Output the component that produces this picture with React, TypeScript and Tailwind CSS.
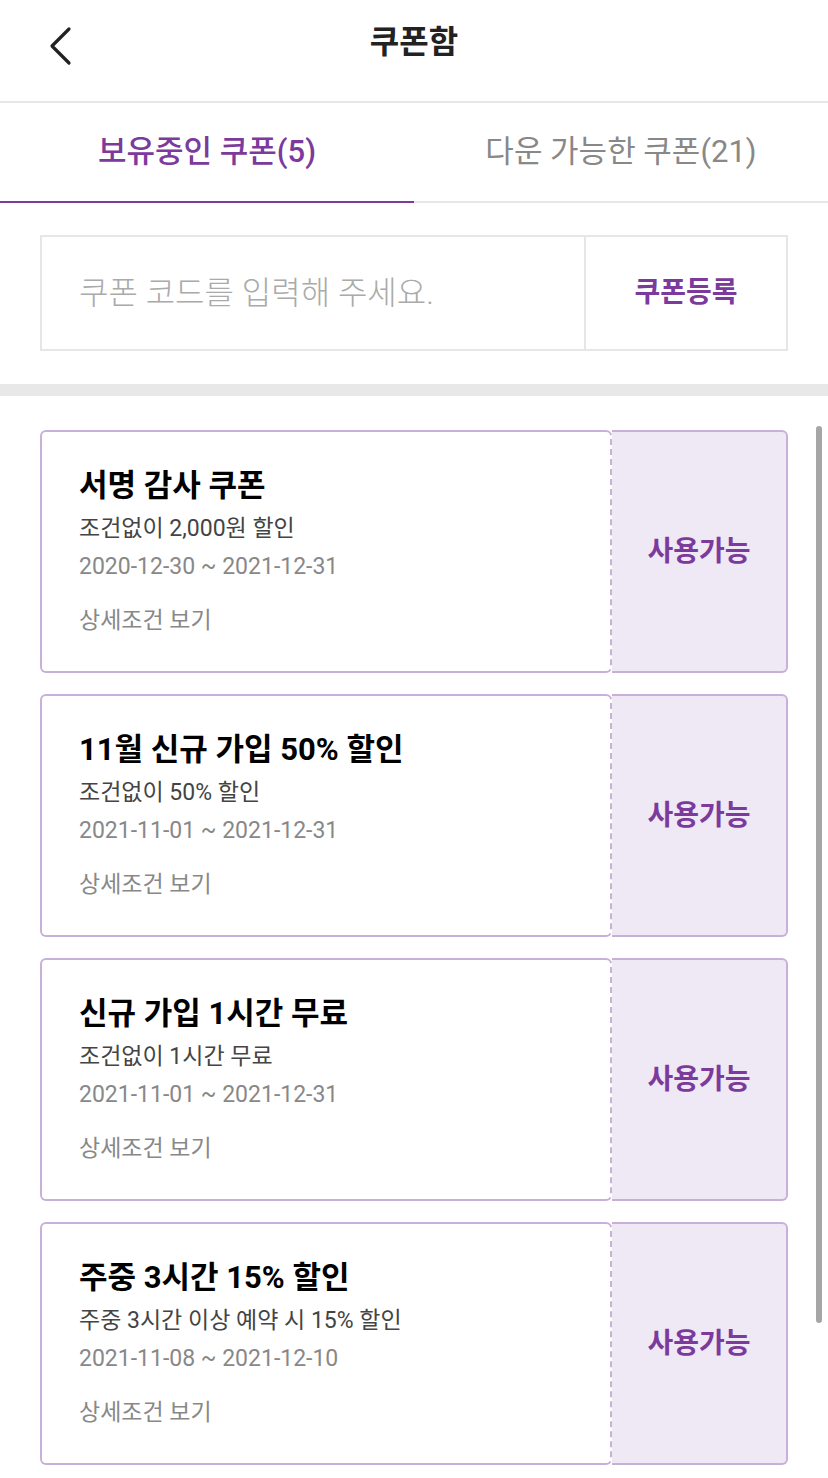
const coupons = [
  { title: "서명 감사 쿠폰", desc: "조건없이 2,000원 할인", period: "2020-12-30 ~ 2021-12-31" },
  { title: "11월 신규 가입 50% 할인", desc: "조건없이 50% 할인", period: "2021-11-01 ~ 2021-12-31" },
  { title: "신규 가입 1시간 무료", desc: "조건없이 1시간 무료", period: "2021-11-01 ~ 2021-12-31" },
  { title: "주중 3시간 15% 할인", desc: "주중 3시간 이상 예약 시 15% 할인", period: "2021-11-08 ~ 2021-12-10" },
];

function CouponCard({ title, desc, period }: { title: string; desc: string; period: string }) {
  return (
    <div className="flex h-[243px]">
      <div className="w-[572px] border-2 border-[#c9b0d8] rounded-[6px] pl-[37px] pt-[34px] [border-right-style:dashed]">
        <h3 className="text-[31px] font-bold leading-[40px] text-black">{title}</h3>
        <p className="mt-[7px] text-[23px] leading-[32px] text-[#444]">{desc}</p>
        <p className="mt-[6px] text-[23px] leading-[32px] text-[#888]">{period}</p>
        <p className="mt-[22px] text-[23px] leading-[32px] text-[#888]">상세조건 보기</p>
      </div>
      <div className="flex-1 border-2 border-l-0 border-[#c9b0d8] rounded-r-[6px] bg-[#efe8f5] flex items-center justify-center">
        <span className="text-[28px] font-bold text-[#7b3a9c]">사용가능</span>
      </div>
    </div>
  );
}

export default function App() {
  return (
    <div className="w-[828px] min-h-[1478px] bg-white font-['Roboto','Noto_Sans_CJK_KR',sans-serif]">
      <header className="relative h-[103px] border-b-2 border-[#e6e6e6] flex justify-center pt-[22px]">
        <button className="absolute left-[40px] top-[22px] p-1">
          <svg width="32" height="40" viewBox="0 0 32 40" fill="none">
            <path d="M25 3 L8 20 L25 37" stroke="#222" strokeWidth="3.2" strokeLinecap="round" strokeLinejoin="round" />
          </svg>
        </button>
        <h1 className="text-[32px] font-bold leading-[40px] text-[#222]">쿠폰함</h1>
      </header>

      <div className="flex h-[100px]">
        <div className="flex-1 flex items-center justify-center border-b-2 border-[#7b3a9c]">
          <span className="text-[31px] font-medium text-[#7b3a9c]">보유중인 쿠폰(5)</span>
        </div>
        <div className="flex-1 flex items-center justify-center border-b-2 border-[#e6e6e6]">
          <span className="text-[31px] text-[#888]">다운 가능한 쿠폰(21)</span>
        </div>
      </div>

      <div className="px-[40px] pt-[32px] pb-[33px]">
        <div className="flex h-[116px] border-2 border-[#e6e6e6]">
          <div className="flex-1 flex items-center pl-[37px] text-[32px] font-light text-[#aaa]">쿠폰 코드를 입력해 주세요.</div>
          <div className="w-[202px] border-l-2 border-[#e6e6e6] flex items-center justify-center">
            <span className="text-[28px] font-bold text-[#7b3a9c]">쿠폰등록</span>
          </div>
        </div>
      </div>

      <div className="h-[12px] bg-[#e8e8e8]" />

      <div className="relative px-[40px] pt-[34px] pb-[14px] flex flex-col gap-[21px]">
        {coupons.map((c) => (
          <CouponCard key={c.title} {...c} />
        ))}
        <div className="absolute right-[6px] top-[30px] w-[6px] h-[897px] rounded-full bg-[#a6a6a6]" />
      </div>
    </div>
  );
}
